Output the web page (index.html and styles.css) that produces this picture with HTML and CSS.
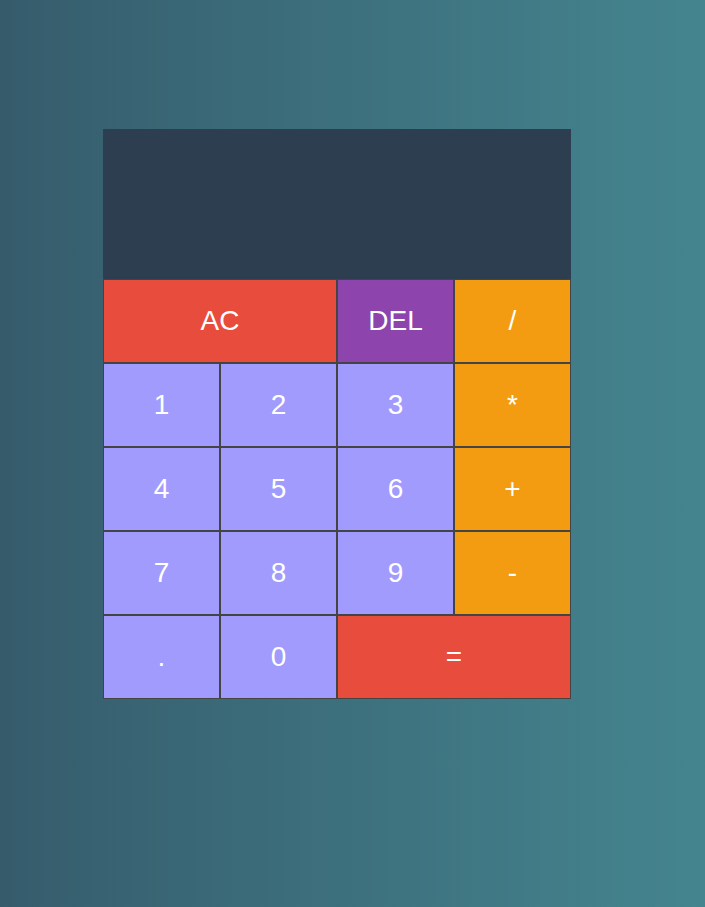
FILE: index.html
```html
<!DOCTYPE html>
<html lang="en">
<head>
<meta charset="utf-8">
<title>Calculator</title>
<link rel="stylesheet" href="styles.css">
</head>
<body>
<div class="calculator">
  <div class="output"></div>
  <button class="btn span-two clear">AC</button>
  <button class="btn del">DEL</button>
  <button class="btn op">/</button>
  <button class="btn num">1</button>
  <button class="btn num">2</button>
  <button class="btn num">3</button>
  <button class="btn op">*</button>
  <button class="btn num">4</button>
  <button class="btn num">5</button>
  <button class="btn num">6</button>
  <button class="btn op">+</button>
  <button class="btn num">7</button>
  <button class="btn num">8</button>
  <button class="btn num">9</button>
  <button class="btn op">-</button>
  <button class="btn num">.</button>
  <button class="btn num">0</button>
  <button class="btn span-two equals">=</button>
</div>
</body>
</html>
```
FILE: styles.css
```css
* { box-sizing: border-box; }
html, body { margin: 0; padding: 0; }
body {
  min-height: 100vh;
  background: linear-gradient(to right, #365c6c, #44858f);
  font-family: "Liberation Sans", Arial, sans-serif;
  padding: 129px 0 0 103px;
}
.calculator {
  display: grid;
  grid-template-columns: repeat(4, 117px);
  grid-template-rows: 150px repeat(5, 84px);
}
.output {
  grid-column: 1 / -1;
  background: #2c3e50;
}
.btn {
  font-family: "Liberation Sans", Arial, sans-serif;
  font-size: 28px;
  color: #fff;
  border: 1px solid #444;
  outline: none;
  cursor: pointer;
  padding: 0;
  margin: 0;
}
.span-two { grid-column: span 2; }
.clear { background: #e74c3c; }
.del { background: #8e44ad; }
.op { background: #f39c12; }
.num { background: #a29bfe; }
.equals { background: #e74c3c; }
```
